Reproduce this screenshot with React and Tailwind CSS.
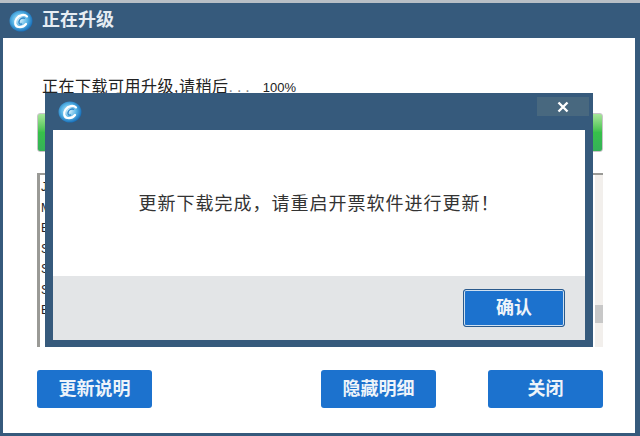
const Logo = ({ width = 24, height = 22 }) => (
  <svg width={width} height={height} viewBox="0 0 24 22" className="shrink-0">
    <defs>
      <radialGradient id="ball" cx="45%" cy="45%" r="60%">
        <stop offset="0%" stopColor="#d8f1fb" />
        <stop offset="55%" stopColor="#56b4e6" />
        <stop offset="100%" stopColor="#0d62b0" />
      </radialGradient>
    </defs>
    <ellipse cx="12" cy="11" rx="11.5" ry="10.5" fill="url(#ball)" />
    <path
      d="M18 6.5C15.5 3.8 10 4.8 7.5 8.5 5 12.2 6 16.3 9.5 17 12.5 17.5 15.5 16 17 14"
      fill="none"
      stroke="#ffffff"
      strokeWidth="2.2"
      strokeLinecap="round"
    />
    <path d="M16 8.5C13.5 7 10.5 9 10 11.5 9.6 13.5 11 14.5 13 14" fill="none" stroke="#2f86c8" strokeWidth="1.4" />
  </svg>
);

const BlueButton = ({ children, className = "" }) => (
  <button className={`h-[38px] bg-[#1c72ce] rounded-[3px] text-[#eef4fa] text-[18px] font-bold flex items-center justify-center ${className}`}>
    {children}
  </button>
);

const App = () => {
  const listLetters = ["J", "M", "B", "S", "S", "S", "B"];

  return (
    <div className="relative w-[640px] h-[436px] overflow-hidden bg-[#b8bfc6] pt-[3px] font-['Liberation_Sans','Noto_Sans_CJK_SC',sans-serif]">
      <div className="h-[433px] flex flex-col bg-[#365a7c]">
        {/* Title bar */}
        <div className="h-[35px] shrink-0 flex items-center gap-[9px] pl-[9px]">
          <Logo />
          <span className="text-[18px] font-bold text-[#e6edf3]">正在升级</span>
        </div>

        {/* Body */}
        <div className="flex-1 ml-[3px] mr-[5px] mb-[3px] bg-white pl-[34px] pr-[32px] flex flex-col">
          <p className="mt-[39px] ml-[5px] h-[20px] text-[16px] leading-[20px] text-[#222] whitespace-nowrap">
            <span className="tracking-[0.5px]">正在下载可用升级,请稍后</span>
            <span className="tracking-[4px] text-[#888]">...</span>
            <span className="ml-[9px] text-[13px]">100%</span>
          </p>

          <div className="mt-[16px] h-[39px] shrink-0 rounded-[3px] border border-[#c9c4c9] bg-gradient-to-b from-[#a6e69a] via-[#37c04a] to-[#35b158]"></div>

          <div className="mt-[21px] h-[174px] shrink-0 border-l-[3px] border-t-[2px] border-[#9a9a96] flex justify-between">
            <div className="pl-[1px] pt-[3px] flex flex-col gap-[2.5px]">
              {listLetters.map((letter, i) => (
                <span key={i} className="text-[12px] leading-[18px] text-[#222]">{letter}</span>
              ))}
            </div>
            <div className="w-[8px] bg-[#f2efec] flex flex-col pt-[130px]">
              <div className="h-[18px] bg-[#c8c8c8]"></div>
            </div>
          </div>

          <div className="mt-[23px] flex justify-between">
            <BlueButton className="w-[115px]">更新说明</BlueButton>
            <div className="flex gap-[52px]">
              <BlueButton className="w-[115px]">隐藏明细</BlueButton>
              <BlueButton className="w-[115px]">关闭</BlueButton>
            </div>
          </div>
        </div>
      </div>

      {/* Dialog */}
      <div className="absolute left-[45px] top-[93px] w-[548px] h-[254px] bg-[#365a7c] flex flex-col px-[8px] pb-[7px]">
        <div className="h-[37px] shrink-0 -mx-[8px] pl-[13px] pr-[4px] flex items-center justify-between">
          <Logo />
          <div className="w-[52px] h-[19px] -mt-[10px] bg-[#48687f] flex items-center justify-center">
            <svg width="12" height="12" viewBox="0 0 12 12">
              <path d="M1.5 1.5L10.5 10.5M10.5 1.5L1.5 10.5" stroke="#ffffff" strokeWidth="2.4" />
            </svg>
          </div>
        </div>
        <div className="flex-1 bg-white flex items-center justify-center">
          <p className="mt-[2px] text-[18px] text-[#333] tracking-[1px] whitespace-nowrap">{"更新下载完成\uFF0C请重启开票软件进行更新\uFF01"}</p>
        </div>
        <div className="h-[64px] shrink-0 bg-[#e3e5e7] flex items-center justify-end pr-[20px]">
          <button className="w-[102px] h-[38px] rounded-[3px] border border-[#2a5a8c] bg-[#1c72ce] ring-1 ring-inset ring-[#cfe0f0] text-[#eef4fa] text-[18px] font-bold">
            确认
          </button>
        </div>
      </div>
    </div>
  );
};

export default App;
